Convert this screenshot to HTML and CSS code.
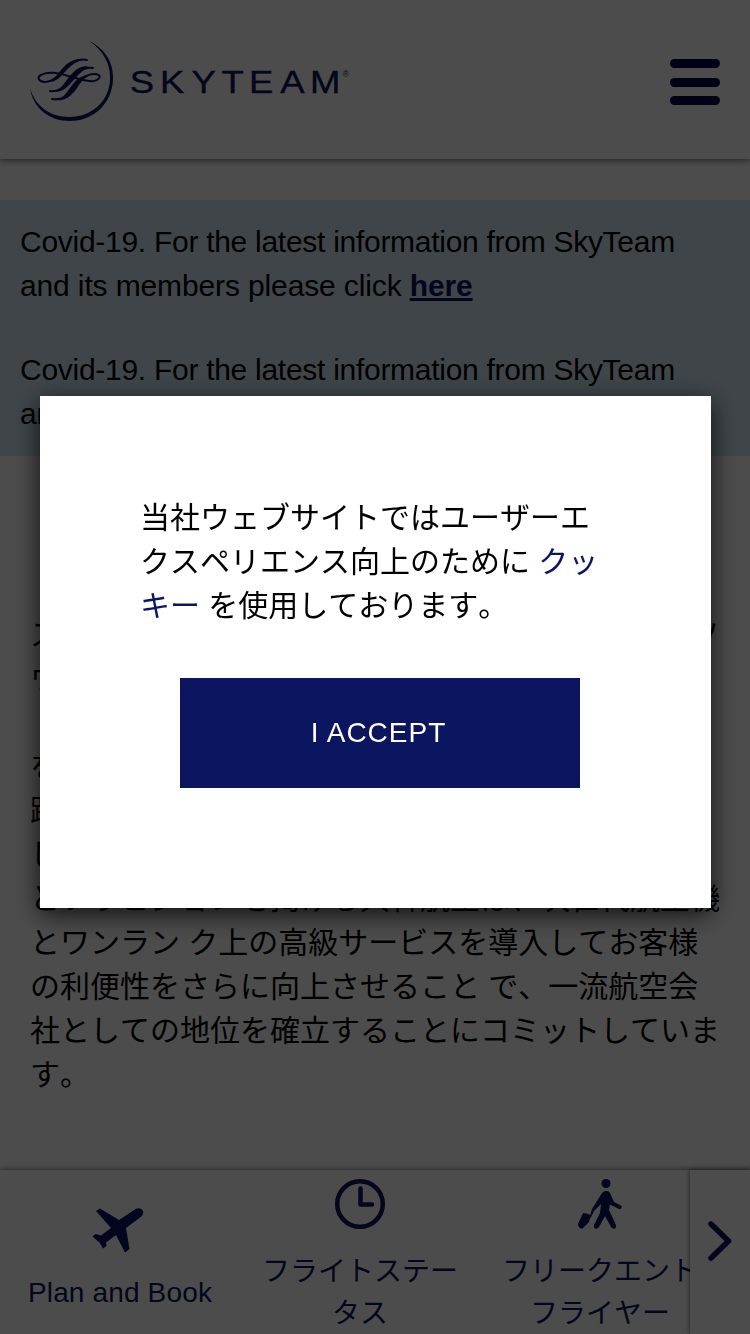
FILE: index.html
```html
<!DOCTYPE html>
<html lang="ja">
<head>
    <meta charset="utf-8">
    <title>SkyTeam</title>
    <link rel="stylesheet" href="styles.css">
</head>
<body>
    <div class="page">
        <header class="header">
            <svg class="logo" width="322" height="84" viewBox="0 0 322 84">
                <g transform="translate(-30 -40)">
                    <path class="fill" d="M89 41C106 49 114 64 113 80C112 103 94 121 70 121C49 121 33 108 30 88C35 106 50 117 69 117C92 117 109 101 110 80C111 64 103 50 89 41Z"/>
                    <g class="swirl">
                        <path d="M87 60C77 58 71 63 65 69C57 77 51 83 44 82C38 81 37 77 41 75C49 70 61 74 72 77C80 79 88 82 94 81C101 79 102 74 94 74C84 74 80 82 73 90C67 97 62 100 52 99"/>
                        <path d="M93 68C84 66 77 72 71 79C63 88 58 92 50 91"/>
                    </g>
                    <path class="fill" d="M84 60C76 61 70 66 64 73C59 79 54 82 49 82C55 79 57 75 61 70C67 63 74 57 84 60Z"/>
                    <path class="fill" d="M90 67C83 69 78 75 72 82C66 89 61 92 54 92C62 89 64 83 69 77C75 70 81 64 90 67Z"/>
                    <path class="fill" d="M88 75C82 79 79 86 74 92C68 99 62 101 55 100C64 98 66 93 70 88C75 81 79 76 88 75Z"/>
                    <text class="wordmark" transform="translate(131 93) scale(1.14 1)" x="-1 25.500 53 79.500 103.500 131 157">SKYTEAM</text>
                    <text class="reg" x="342.500" y="77">®</text>
                </g>
            </svg>
            <div class="burger">
                <span></span>
                <span></span>
                <span></span>
            </div>
        </header>

        <div class="alert">
            <p><span>Covid-19. For the latest information from SkyTeam</span> and its members please click <a href="#">here</a></p>
            <p><span>Covid-19. For the latest information from SkyTeam</span> and its members please click <a href="#">here</a></p>
        </div>

        <main class="content">
            <p>スカイチームの創設メンバーである大韓航空は、ソ<br>ウルを拠点としています。</p>
            <p>を超える国際線ネットワークを持ち、新たに<br>踏み出す大韓航空は、さらなる飛躍を目指<br>し、世界の航空業界をリードする企業になる<br>というビジョンを掲げる大韓航空は、次世代航空機<br>とワンラン ク上の高級サービスを導入してお客様<br>の利便性をさらに向上させること で、一流航空会<br>社としての地位を確立することにコミットしていま<br>す。</p>
        </main>

        <nav class="tabs">
            <div class="tab-list">
                <a class="tab" href="#">
                    <svg width="56" height="50" viewBox="0 0 56 50">
                        <path class="fill" d="M4 11L8 8.500L27 20L43 9.500C48 6 54 11 50 16L34 28L37.500 49L33 52.500L24 35L14 42.500L14.500 46L11 48.500L7.500 42.500L0.500 36.500L3.500 34L9 35.500L19 28Z"/>
                    </svg>
                    <span class="latin">Plan and Book</span>
                </a>
                <a class="tab" href="#">
                    <svg width="50" height="50" viewBox="0 0 50 50">
                        <circle class="line" cx="25" cy="25" r="22.800"/>
                        <path class="line" d="M25.500 9.500V25.500H37"/>
                    </svg>
                    <span>フライトステータス</span>
                </a>
                <a class="tab" href="#">
                    <svg width="50" height="50" viewBox="0 0 50 50">
                        <circle class="fill" cx="31" cy="4.500" r="4.500"/>
                        <path class="fill" d="M27 14C30 11 34 12 35 14L39 23L45 26C48 27 47 30.500 44 30L35 25.500L34 31L41 46C42 50 38 51 36 48L30 37L24 48C22 51 18 50 19 46L25 34L26 25L19 32L15.500 39L14.500 38.500L17 30Z"/>
                        <path class="fill" d="M8 34L14 35L15.500 37L14 43L8 49C6 51 3 48 3 45Z"/>
                    </svg>
                    <span>フリークエントフライヤー</span>
                </a>
            </div>
            <div class="next">
                <svg width="24" height="40" viewBox="0 0 24 40">
                    <path class="chevron" d="M3 3L20.500 20L3 37"/>
                </svg>
            </div>
        </nav>
    </div>

    <div class="overlay">
        <div class="modal">
            <p>当社ウェブサイトではユーザーエクスペリエンス向上のために <a href="#">クッキー</a> を使用しております。</p>
            <button class="accept">I ACCEPT</button>
        </div>
    </div>
</body>
</html>
```
FILE: styles.css
```css
* {
    box-sizing: border-box;
}
body {
    margin: 0;
    font-family: "Liberation Sans", "Noto Sans CJK JP", sans-serif;
    font-size: 30px;
    line-height: 44px;
    font-kerning: none;
    color: #000;
    background: #fff;
}
p {
    margin: 0;
}
a {
    color: #0b1560;
}
.page {
    display: flex;
    flex-direction: column;
    height: 1334px;
    overflow: hidden;
}
.header {
    display: flex;
    justify-content: space-between;
    align-items: center;
    flex: none;
    height: 159px;
    padding: 5px 30px 0;
    box-shadow: 0 1px 7px rgba(0, 0, 0, 0.6);
}
.fill {
    fill: #0b1560;
}
.swirl {
    fill: none;
    stroke: #0b1560;
    stroke-width: 2;
    stroke-linecap: round;
}
.wordmark {
    font-size: 32px;
    fill: #0b1560;
    stroke: #0b1560;
    stroke-width: 0.4;
}
.reg {
    font-size: 9px;
    fill: #0b1560;
}
.burger {
    display: flex;
    flex-direction: column;
    gap: 9.5px;
}
.burger span {
    width: 50px;
    height: 9px;
    border-radius: 5px;
    background: #00004f;
}
.alert {
    display: flex;
    flex-direction: column;
    flex: none;
    gap: 40px;
    margin-top: 41px;
    padding: 20px;
    letter-spacing: -0.13px;
    font-kerning: auto;
    background: #d2e8f4;
}
.alert span {
    letter-spacing: -0.28px;
}
.alert a {
    font-weight: bold;
}
.content {
    display: flex;
    flex-direction: column;
    flex: 1;
    gap: 44px;
    padding: 157px 30px 0;
    white-space: nowrap;
}
.tabs {
    display: flex;
    flex: none;
    height: 164px;
    box-shadow: 0 0 6px rgba(0, 0, 0, 0.6);
}
.tab-list {
    display: flex;
    flex: 1;
    overflow: hidden;
}
.tab {
    display: flex;
    flex-direction: column;
    flex: none;
    justify-content: center;
    align-items: center;
    gap: 22px;
    width: 240px;
    padding: 10px 20px 0;
    font-size: 28px;
    line-height: 42px;
    text-align: center;
    text-decoration: none;
}
.tab svg {
    flex: none;
    overflow: visible;
}
.latin {
    letter-spacing: 0.15px;
}
.line {
    fill: none;
    stroke: #0b1560;
    stroke-width: 4.5;
    stroke-linecap: round;
    stroke-linejoin: round;
}
.next {
    display: flex;
    justify-content: center;
    align-items: center;
    width: 60px;
    padding-bottom: 22px;
    box-shadow: 0 0 5px rgba(0, 0, 0, 0.6);
}
.chevron {
    fill: none;
    stroke: #0b1560;
    stroke-width: 5.5;
    stroke-linecap: round;
    stroke-linejoin: round;
}
.overlay {
    display: flex;
    position: fixed;
    inset: 0;
    align-items: flex-start;
    padding: 396px 39px 0 40px;
    background: rgba(0, 0, 0, 0.7);
}
.modal {
    width: 671px;
    height: 512px;
    padding: 100px;
    background: #fff;
    box-shadow: 0 6px 24px rgba(0, 0, 0, 0.8);
}
.modal a {
    text-decoration: none;
}
.accept {
    display: block;
    width: 400px;
    height: 110px;
    margin: 50px 0 0 40px;
    border: 0;
    padding: 0 3px 0 0;
    font-family: inherit;
    font-size: 28px;
    letter-spacing: 1px;
    color: #fff;
    background: #0b1560;
}
```
